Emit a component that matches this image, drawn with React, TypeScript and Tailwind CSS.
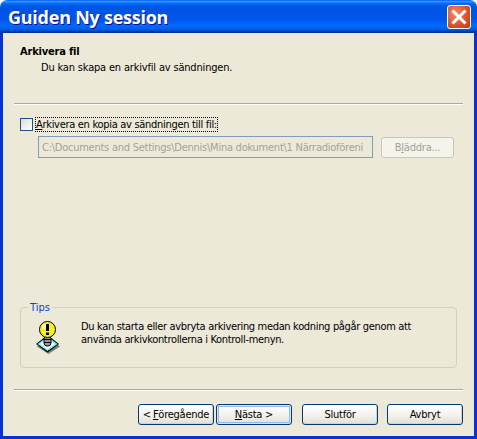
const XpButton = ({ children, primary, className = "" }: { children: React.ReactNode; primary?: boolean; className?: string }) => (
  <button
    className={
      "flex h-[21px] w-[76px] items-center justify-center rounded-[3px] border border-[#003c74] bg-gradient-to-b from-white via-[#f4f3ee] to-[#e3dfd6] tracking-[-0.25px] text-black " +
      (primary ? "shadow-[inset_0_0_0_1px_#cee7ff,inset_0_0_0_2px_#98b8ea] " : "shadow-[inset_-1px_-1px_0_#d6d0c5] ") +
      className
    }
  >
    {children}
  </button>
)

const TipIcon = () => (
  <svg width="24" height="33" viewBox="0 0 24 33" className="mt-[6px] shrink-0">
    <path d="M12.5 17 L24 25.5 L12.5 33 L1 25.5 Z" fill="#7d7d7d" />
    <path d="M11.5 14 L23 23 L11.5 31.5 L0 23 Z" fill="#000" />
    <path d="M11.5 15.5 L21.5 23 L11.5 30 L1.5 23 Z" fill="#7ff0f5" />
    <path d="M11.5 17.5 L18.5 23 L11.5 28.5 L4.5 23 Z" fill="#fff" />
    <rect x="8" y="15" width="7" height="10" rx="3" fill="#9a9a9a" stroke="#000" />
    <path d="M8 18.5 H15 M8 21.5 H15" stroke="#000" />
    <circle cx="11.5" cy="8.5" r="8" fill="#f6f020" stroke="#000" />
    <circle cx="8.5" cy="5.5" r="2.5" fill="#fffbb0" />
    <rect x="10" y="3" width="3" height="7" fill="#000" />
    <rect x="10" y="11.5" width="3" height="2.5" fill="#000" />
  </svg>
)

export default function App() {
  return (
    <div className="flex h-[439px] w-[477px] flex-col overflow-hidden rounded-t-[7px] bg-white font-['DejaVu_Sans_Condensed','Liberation_Sans',sans-serif] text-[11px] leading-[13px] text-black">
      <div className="flex h-[33px] shrink-0 items-center justify-between bg-[linear-gradient(to_bottom,#0058ee_0%,#3593ff_4%,#288eff_6%,#127dff_8%,#036ffc_10%,#0262ee_14%,#0057e5_20%,#0054e3_24%,#0055eb_56%,#005bf5_66%,#026afe_76%,#0062ef_86%,#0052d6_92%,#0040ab_94%,#003092_100%)] pl-[8px] pr-[6px]">
        <span className="pt-[2px] font-['Open_Sans',sans-serif] text-[18px] font-bold tracking-[-0.25px] text-white [text-shadow:1px_1px_0_#0f1089]">Guiden Ny session</span>
        <button className="flex h-[24px] w-[24px] items-center justify-center rounded-[3px] border border-white bg-[radial-gradient(circle_at_35%_35%,#f0906c,#dc4f26_60%,#bd3a12)]">
          <svg width="16" height="16" viewBox="0 0 16 16">
            <path d="M2.5 2.5 L13.5 13.5 M13.5 2.5 L2.5 13.5" stroke="#fff" strokeWidth="3" strokeLinecap="square" />
          </svg>
        </button>
      </div>

      <div className="flex min-h-0 flex-1 flex-col border-x-[3px] border-b-[3px] border-[#0831d9] bg-[#ece9d8]">
        <div className="pl-[17px] pt-[12px]">
          <div className="font-bold tracking-[-0.2px]">Arkivera fil</div>
          <div className="mt-[3px] pl-[21px] tracking-[-0.18px]">Du kan skapa en arkivfil av sändningen.</div>
        </div>

        <div className="mx-[11px] mt-[29px] h-[2px] border-y border-b-white border-t-[#aca899]" />

        <div className="ml-[17px] mt-[12px] flex items-center">
          <span className="h-[13px] w-[13px] border border-[#1c5180] bg-gradient-to-br from-[#dcdcd7] to-white" />
          <span className="ml-[2px] border border-dotted border-black tracking-[-0.3px]">
            <u>A</u>rkivera en kopia av sändningen till fil:
          </span>
        </div>

        <div className="ml-[35px] mt-[4px] flex items-center gap-[8px]">
          <div className="flex h-[22px] w-[335px] items-center overflow-hidden whitespace-nowrap border border-[#7f9db9] pl-[3px] tracking-[-0.25px] text-[#a5a294]">
            C:\Documents and Settings\Dennis\Mina dokument\1 Närradioföreni
          </div>
          <button className="flex h-[21px] w-[73px] items-center justify-center rounded-[3px] border border-[#c9c7ba] bg-[#f5f4ea] tracking-[-0.2px] text-[#a1a192]">
            B<u>l</u>äddra...
          </button>
        </div>

        <fieldset className="mx-[17px] mt-[143px] h-[67px] rounded-[4px] border border-[#d0d0bf] pl-[7px]">
          <legend className="px-[2px] text-[#0046d5]">Tips</legend>
          <div className="flex items-start pl-[8px] pt-[1px]">
            <TipIcon />
            <p className="ml-[21px] mt-[5px] leading-[13px] tracking-[-0.33px]">
              Du kan starta eller avbryta arkivering medan kodning pågår genom att
              <br />
              använda arkivkontrollerna i Kontroll-menyn.
            </p>
          </div>
        </fieldset>

        <div className="mx-[11px] mt-[21px] h-[2px] border-y border-b-white border-t-[#aca899]" />

        <div className="ml-[135px] mt-[13px] flex">
          <XpButton>
            &lt; <u className="ml-[2px]">F</u>öregående
          </XpButton>
          <XpButton primary className="ml-[2px]">
            <u>N</u>ästa &gt;
          </XpButton>
          <XpButton className="ml-[10px]">Slutför</XpButton>
          <XpButton className="ml-[9px]">Avbryt</XpButton>
        </div>
      </div>
    </div>
  )
}
